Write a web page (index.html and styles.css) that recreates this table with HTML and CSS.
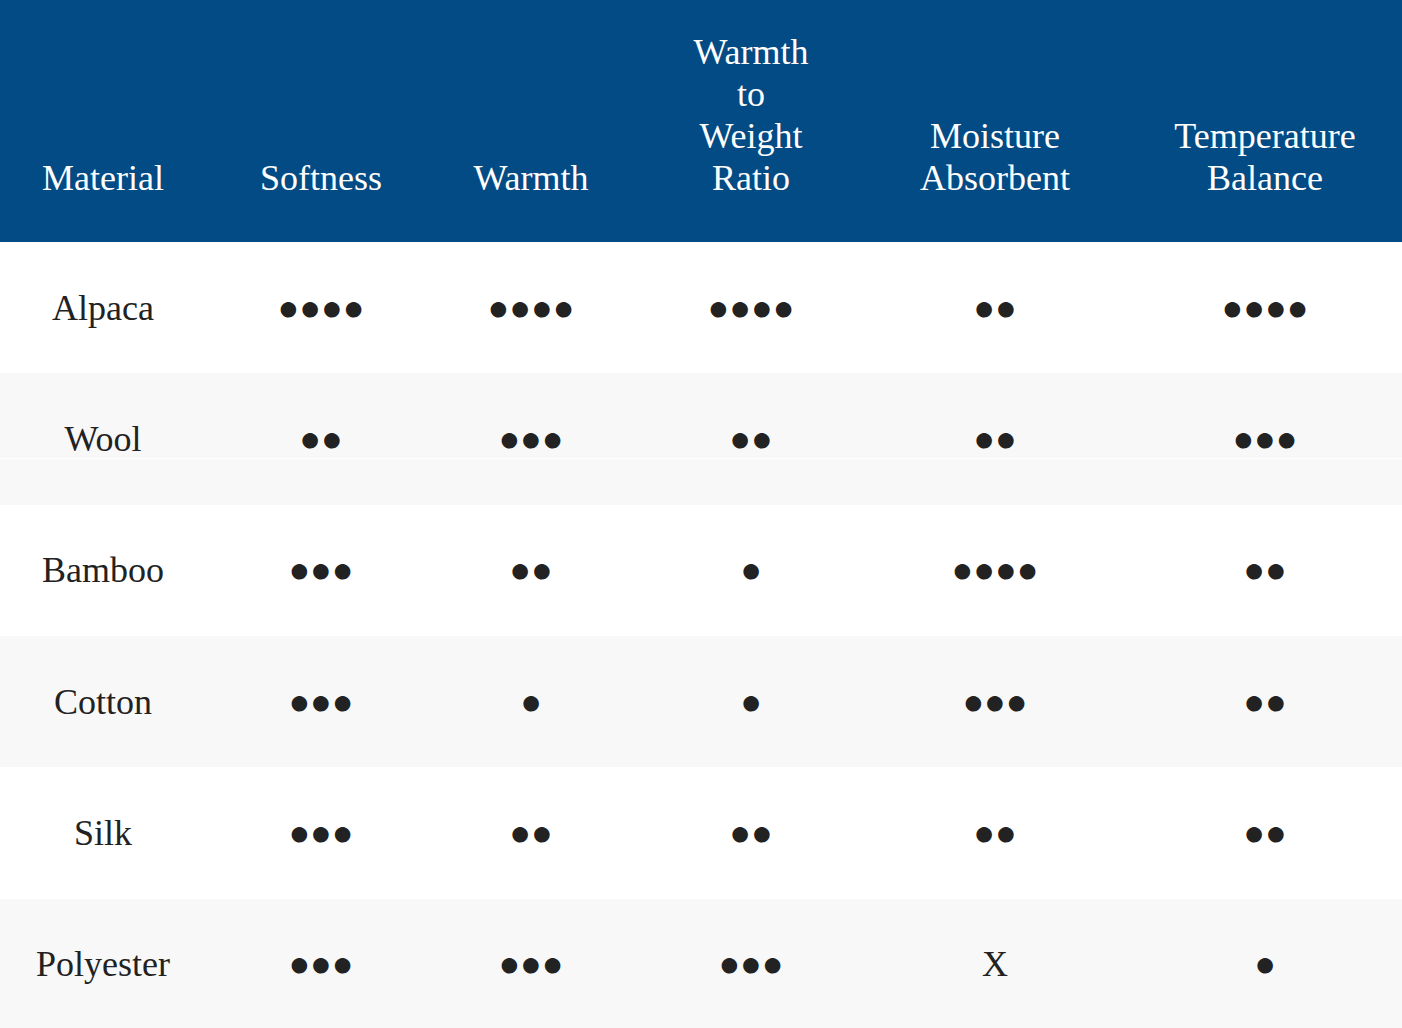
FILE: index.html
```html
<!DOCTYPE html>
<html lang="en">
<head>
<meta charset="utf-8">
<title>Material comparison</title>
<link rel="stylesheet" href="styles.css">
</head>
<body>
<table class="compare">
  <colgroup>
    <col class="c-mat">
    <col class="c-soft">
    <col class="c-warm">
    <col class="c-ratio">
    <col class="c-moist">
    <col class="c-temp">
  </colgroup>
  <thead>
    <tr>
      <th>Material</th>
      <th>Softness</th>
      <th>Warmth</th>
      <th>Warmth<br>to<br>Weight<br>Ratio</th>
      <th>Moisture<br>Absorbent</th>
      <th>Temperature<br>Balance</th>
    </tr>
  </thead>
  <tbody>
    <tr>
      <td>Alpaca</td>
      <td class="dots">●●●●</td>
      <td class="dots">●●●●</td>
      <td class="dots">●●●●</td>
      <td class="dots">●●</td>
      <td class="dots">●●●●</td>
    </tr>
    <tr class="alt seam">
      <td>Wool</td>
      <td class="dots">●●</td>
      <td class="dots">●●●</td>
      <td class="dots">●●</td>
      <td class="dots">●●</td>
      <td class="dots">●●●</td>
    </tr>
    <tr>
      <td>Bamboo</td>
      <td class="dots">●●●</td>
      <td class="dots">●●</td>
      <td class="dots">●</td>
      <td class="dots">●●●●</td>
      <td class="dots">●●</td>
    </tr>
    <tr class="alt">
      <td>Cotton</td>
      <td class="dots">●●●</td>
      <td class="dots">●</td>
      <td class="dots">●</td>
      <td class="dots">●●●</td>
      <td class="dots">●●</td>
    </tr>
    <tr>
      <td>Silk</td>
      <td class="dots">●●●</td>
      <td class="dots">●●</td>
      <td class="dots">●●</td>
      <td class="dots">●●</td>
      <td class="dots">●●</td>
    </tr>
    <tr class="alt">
      <td>Polyester</td>
      <td class="dots">●●●</td>
      <td class="dots">●●●</td>
      <td class="dots">●●●</td>
      <td>X</td>
      <td class="dots">●</td>
    </tr>
  </tbody>
</table>
</body>
</html>
```

FILE: styles.css
```css
html, body {
  margin: 0;
  padding: 0;
  overflow: hidden;
  background: #ffffff;
}

.compare {
  border-collapse: collapse;
  border-spacing: 0;
  table-layout: fixed;
  width: 1416px;
  font-family: "Liberation Serif", "Times New Roman", serif;
  font-size: 36px;
  line-height: normal;
  color: #222222;
}

.c-mat { width: 206px; }
.c-soft { width: 230px; }
.c-warm { width: 190px; }
.c-ratio { width: 250px; }
.c-moist { width: 238px; }
.c-temp { width: 302px; }

.compare thead tr {
  background: #034b84;
}

.compare th {
  height: 242px;
  box-sizing: border-box;
  padding: 0 4px 43px;
  vertical-align: bottom;
  text-align: center;
  font-weight: normal;
  color: #ffffff;
}

.compare td {
  height: 131.35px;
  padding: 0 4px;
  text-align: center;
  vertical-align: middle;
  background: #ffffff;
}

.compare tr.alt td {
  background: #f8f8f8;
}

.compare tr.seam td {
  background: linear-gradient(to bottom, #f8f8f8 0, #f8f8f8 85px, #ffffff 85px, #ffffff 86px, #f8f8f8 86px);
}

.compare td.dots {
  font-family: "Liberation Serif", "Liberation Sans", serif;
  font-size: 36px;
  color: #222222;
}
```
